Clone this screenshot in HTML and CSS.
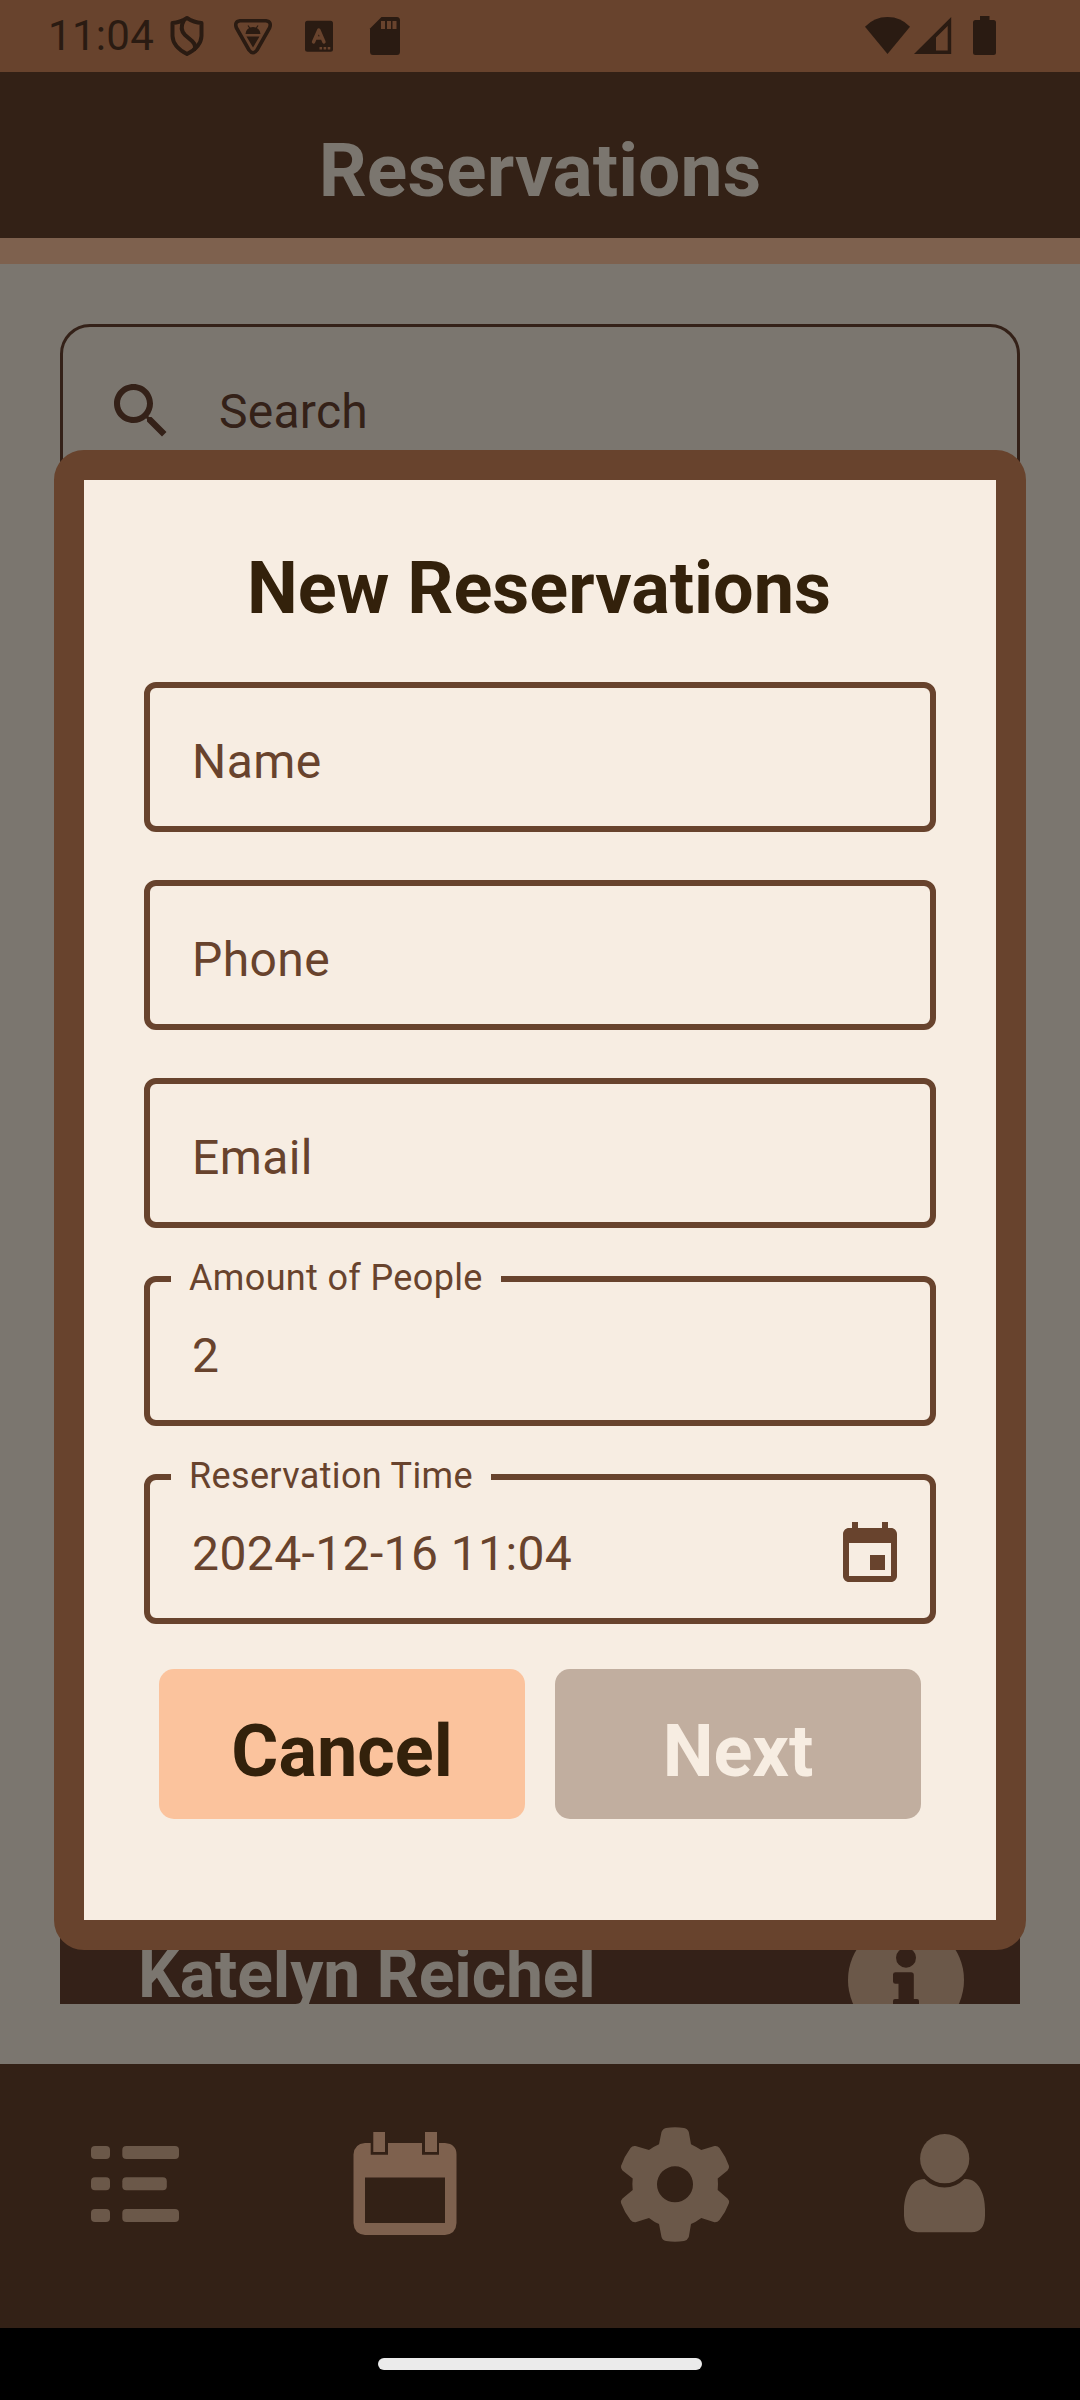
FILE: index.html
```html
<!DOCTYPE html>
<html lang="en">
<head>
<meta charset="utf-8">
<title>Reservations</title>
<link rel="stylesheet" href="styles.css">
</head>
<body>
<div class="screen">
  <div class="status">
    <span class="clock">11:04</span>
    <div class="status-left">
      <svg class="s-icon" viewBox="0 0 48 48"><g fill="none" stroke="currentColor" stroke-width="4" stroke-linejoin="round"><path d="M24 6 Q31 10.500 38.500 11 V24 Q38 35 24 42 Q10 35 9.500 24 V11 Q17 10.500 24 6Z"/><path d="M21 8 Q16 17 22 23 L29 29 Q34 34 31 38"/></g></svg>
      <svg class="s-icon" viewBox="0 0 48 48"><path fill="none" stroke="currentColor" stroke-width="3.600" stroke-linejoin="round" d="M11 8.700 H37 Q43 9.500 40.500 16 L28 38 Q24 43.500 20 38 L7.500 16 Q5 9.500 11 8.700Z"/><path fill="currentColor" d="M16.500 22 A7.500 7 0 0 1 31.500 22Z M17.500 24.500 H30.500 L24 35.500Z"/><path stroke="currentColor" stroke-width="1.200" d="M19 13.500l2 3M29 13.500l-2 3"/></svg>
      <svg class="s-icon" viewBox="0 0 48 48"><rect x="10" y="8.800" width="28" height="31" rx="2.500" fill="currentColor"/><path class="cut-line" d="M18.500 30 L23.800 18 L29 30 M20.500 26H27"/><path class="cut" d="M24.500 35h2.600v2.400h-2.600zM28.600 35h2.600v2.400h-2.600zM32.700 35h2.600v2.400h-2.600z"/></svg>
      <svg class="s-icon" viewBox="0 0 48 48"><path fill="currentColor" d="M20.500 5 H36 Q39 5 39 8.500 V39.500 Q39 43 36 43 H12 Q9 43 9 39.500 V16.500Z"/><path class="cut" d="M20 9h4v8h-4zM26 9h4v8h-4zM31.500 9h4v8h-4z"/></svg>
    </div>
    <div class="status-right">
      <svg class="s-icon" viewBox="0 0 48 48"><path fill="currentColor" d="M1 14.700 Q10 5 23.500 5 T46 14.700 L23.500 42Z"/></svg>
      <svg class="s-icon" viewBox="0 0 48 48"><path fill="currentColor" fill-rule="evenodd" d="M2 42 L39.200 5 V42Z M24 25.500 V38.500 H35.700 V14Z"/></svg>
      <svg class="s-icon" viewBox="0 0 48 48"><path fill="currentColor" d="M20 4 H29.500 V8 H33.500 Q36 8 36 10.500 V40.500 Q36 43 33.500 43 H15.500 Q13 43 13 40.500 V10.500 Q13 8 15.500 8 H20Z"/></svg>
    </div>
  </div>

  <header class="header"><h1 class="header-title">Reservations</h1></header>

  <main class="main">
    <div class="search">
      <svg class="search-icon" viewBox="0 0 24 24"><path fill="currentColor" d="M15.500 14h-.79l-.28-.27C15.410 12.590 16 11.110 16 9.500 16 5.910 13.090 3 9.500 3S3 5.910 3 9.500 5.910 16 9.500 16c1.610 0 3.090-.59 4.230-1.570l.27.28v.79l5 4.990L20.490 19l-4.990-5zm-6 0C7.010 14 5 11.990 5 9.500S7.010 5 9.500 5 14 7.010 14 9.500 11.990 14 9.500 14z"/></svg>
      <span class="search-text">Search</span>
    </div>
    <div class="list">
      <div class="card">
        <span class="card-name">Katelyn Reichel</span>
        <svg class="card-info" viewBox="0 0 116 116"><circle cx="58" cy="58" r="58" fill="#6b5849"/><path fill="#342118" d="M47.500 50.300 H63 Q65.800 50.300 65.800 53 V77 H69 Q71 77 71 79 V88 H45 V79 Q45 77 47 77 H50.500 V61.700 H47.500 Q45 61.700 45 59.500 V52.500 Q45 50.300 47.500 50.300Z"/><circle cx="58" cy="35.700" r="10" fill="#342118"/></svg>
      </div>
    </div>
  </main>

  <nav class="nav">
    <div class="nav-item"><svg class="nav-icon" viewBox="0 0 120 120"><g fill="currentColor"><rect x="16" y="22" width="19" height="13" rx="4"/><rect x="47.300" y="22" width="56.700" height="13" rx="4"/><rect x="16" y="53.300" width="19" height="13" rx="4"/><rect x="47.300" y="53.300" width="44.500" height="13" rx="4"/><rect x="16" y="85" width="19" height="13" rx="4"/><rect x="47.300" y="85" width="56.700" height="13" rx="4"/></g></svg></div>
    <div class="nav-item nav-item-active"><svg class="nav-icon" viewBox="0 0 120 120"><path fill="currentColor" fill-rule="evenodd" d="M20 19 H25.700 V30.700 H43 V19 H77 V30.700 H94 V19 H100 Q111.500 20 111.500 30.500 V99 Q111 110 100 111 H20 Q9 110 8.500 99 V30.500 Q9 20 20 19Z M20 53.500 V99 H100 V53.500Z"/><path fill="currentColor" d="M28.300 8 H40 V28 H28.300Z M80 8 H92 V28 H80Z"/></svg></div>
    <div class="nav-item"><svg class="nav-icon" viewBox="0 0 120 120"><path fill="currentColor" fill-rule="evenodd" d="M46.500 8 Q48 4.500 51 4 Q60 2.300 69 4 Q72.500 4.500 73.800 8 L76 20.300 Q81 22.800 86.300 26 L99.500 22 Q102.500 21.500 104.500 24 Q110.500 32 114 42 Q114.500 44.500 112.500 46.500 L102.700 54.500 Q103.300 60 102.700 66 L112.500 74.500 Q114.500 76.500 114 79 Q110.500 88.500 104.500 96 Q102.500 98.500 99.500 98.300 L86.300 94 Q81 98 76 100 L73.800 113 Q72.500 116.300 69 117 Q60 118.300 51 117 Q47.500 116.300 46.500 113 L44 100 Q39 98 34 94 L20.500 98.300 Q17.500 98.500 15.500 96 Q9.500 88.500 6 79 Q5.500 76.500 7.500 74.500 L17.700 66 Q17 60 17.700 54.500 L7.500 46.500 Q5.500 44.500 6 42 Q9.500 32 15.500 24 Q17.500 21.500 20.500 22 L34 26 Q39 22.500 44 20.300Z M60 42.300 A18 18 0 1 0 60 78.300 A18 18 0 1 0 60 42.300Z"/></svg></div>
    <div class="nav-item"><svg class="nav-icon" viewBox="0 0 120 120"><g fill="currentColor"><circle cx="59.700" cy="34.700" r="24.600"/><path d="M39.500 55 Q48 63.500 59.500 63.500 T79.500 55 C94 54 100 71 100 85 V92 Q99.500 108.300 86.500 108.300 H32.500 Q20 107.500 19 92 V85 C19.500 70 25.500 55 39.500 55Z"/></g></svg></div>
  </nav>

  <div class="gesture"><div class="gesture-bar"></div></div>

  <section class="dialog">
    <h2 class="dialog-title">New Reservations</h2>
    <div class="fields">
      <div class="field"><span class="field-text">Name</span></div>
      <div class="field"><span class="field-text">Phone</span></div>
      <div class="field"><span class="field-text">Email</span></div>
      <div class="field"><span class="field-label">Amount of People</span><span class="field-text">2</span></div>
      <div class="field"><span class="field-label">Reservation Time</span><span class="field-text">2024-12-16 11:04</span>
        <svg class="field-icon" viewBox="0 0 24 24"><path fill="currentColor" d="M17 12h-5v5h5v-5zM16 1v2H8V1H6v2H5c-1.110 0-1.990.9-1.990 2L3 19c0 1.100.89 2 2 2h14c1.100 0 2-.9 2-2V5c0-1.100-.9-2-2-2h-1V1h-2zm3 18H5V8h14v11z"/></svg>
      </div>
    </div>
    <div class="actions">
      <div class="btn btn-cancel">Cancel</div>
      <div class="btn btn-next">Next</div>
    </div>
  </section>
</div>
</body>
</html>
```
FILE: styles.css
```css
* { box-sizing: border-box; }
body { margin: 0; font-family: Roboto, sans-serif; }
h1, h2 { margin: 0; font-weight: 700; }
svg { display: block; flex: none; }

.screen {
  position: relative;
  display: flex;
  flex-direction: column;
  width: 1080px;
  height: 2400px;
  overflow: hidden;
  background: #7b766f;
}

.status {
  display: flex;
  align-items: center;
  height: 72px;
  padding: 0 72px 0 48px;
  background: #68432d;
  color: #2a1b12;
}
.clock { width: 115px; font-size: 42px; line-height: 50px; letter-spacing: 0.3px; white-space: nowrap; }
.status-left { display: flex; gap: 18px; }
.status-right { display: flex; margin-left: auto; }
.s-icon { width: 48px; height: 48px; }
.cut { fill: #68432d; }
.cut-line { fill: none; stroke: #68432d; stroke-width: 3.4; stroke-linecap: round; stroke-linejoin: round; }

.header {
  height: 192px;
  padding-top: 54px;
  border-bottom: 26px solid #7e614e;
  background: #332116;
  text-align: center;
}
.header-title { font-size: 75px; line-height: 88px; letter-spacing: 0.1px; color: #7b766f; }

.main {
  display: flex;
  flex-direction: column;
  height: 1800px;
  padding: 60px;
}
.search {
  display: flex;
  align-items: center;
  gap: 42px;
  height: 174px;
  padding-left: 42px;
  border: 3px solid #342118;
  border-radius: 30px;
  color: #342118;
}
.search-icon { width: 72px; height: 72px; }
.search-text { padding-top: 2px; font-size: 48px; line-height: 56px; letter-spacing: 0.25px; }

.list {
  display: flex;
  flex: 1;
  flex-direction: column;
  justify-content: flex-end;
  min-height: 0;
  overflow: hidden;
}
.card {
  display: flex;
  align-items: flex-start;
  justify-content: space-between;
  height: 162px;
  padding: 80px 56px 0 78px;
  border-radius: 30px 30px 0 0;
  background: #342118;
}
.card-name { padding-top: 14px; font-size: 66px; line-height: 78px; letter-spacing: -0.1px; font-weight: 700; color: #7b766f; }
.card-info { width: 116px; height: 116px; }

.nav { display: flex; height: 264px; background: #332116; color: #6b5849; }
.nav-item { display: flex; flex: 1; justify-content: center; padding-top: 60px; }
.nav-item-active { color: #7e614e; }
.nav-icon { width: 120px; height: 120px; }

.gesture { display: flex; align-items: center; justify-content: center; height: 72px; background: #000; }
.gesture-bar { width: 324px; height: 12px; border-radius: 6px; background: #ebebeb; }

/* Modal over the dimmed page */
.dialog {
  position: absolute;
  top: 450px;
  left: 54px;
  width: 972px;
  height: 1500px;
  padding: 67px 60px 0;
  border: 30px solid #68432d;
  border-radius: 30px;
  background: #f7ede2;
}
.dialog-title { margin-bottom: 51px; padding-right: 2px; font-size: 72px; line-height: 84px; text-align: center; color: #33210b; }

.fields { display: flex; flex-direction: column; gap: 48px; }
.field {
  position: relative;
  display: flex;
  align-items: center;
  justify-content: space-between;
  height: 150px;
  padding: 0 24px 0 42px;
  border: 6px solid #68432d;
  border-radius: 12px;
  color: #68432d;
}
.field-text { padding-top: 9px; font-size: 48px; line-height: 56px; letter-spacing: 0.4px; }
.field-label {
  position: absolute;
  top: -25px;
  left: 21px;
  padding: 0 18px;
  background: #f7ede2;
  font-size: 36px;
  line-height: 42px;
  letter-spacing: 0.35px;
}
.field-icon { width: 72px; height: 72px; margin-top: 12px; }

.actions { display: flex; gap: 30px; margin-top: 45px; padding: 0 15px; }
.btn {
  flex: 1;
  height: 150px;
  padding-top: 41px;
  border-radius: 15px;
  font-size: 72px;
  line-height: 84px;
  font-weight: 700;
  text-align: center;
}
.btn-cancel { background: #fbc39d; color: #33210b; }
.btn-next { background: #c1ae9f; color: #f7ede2; }
```
